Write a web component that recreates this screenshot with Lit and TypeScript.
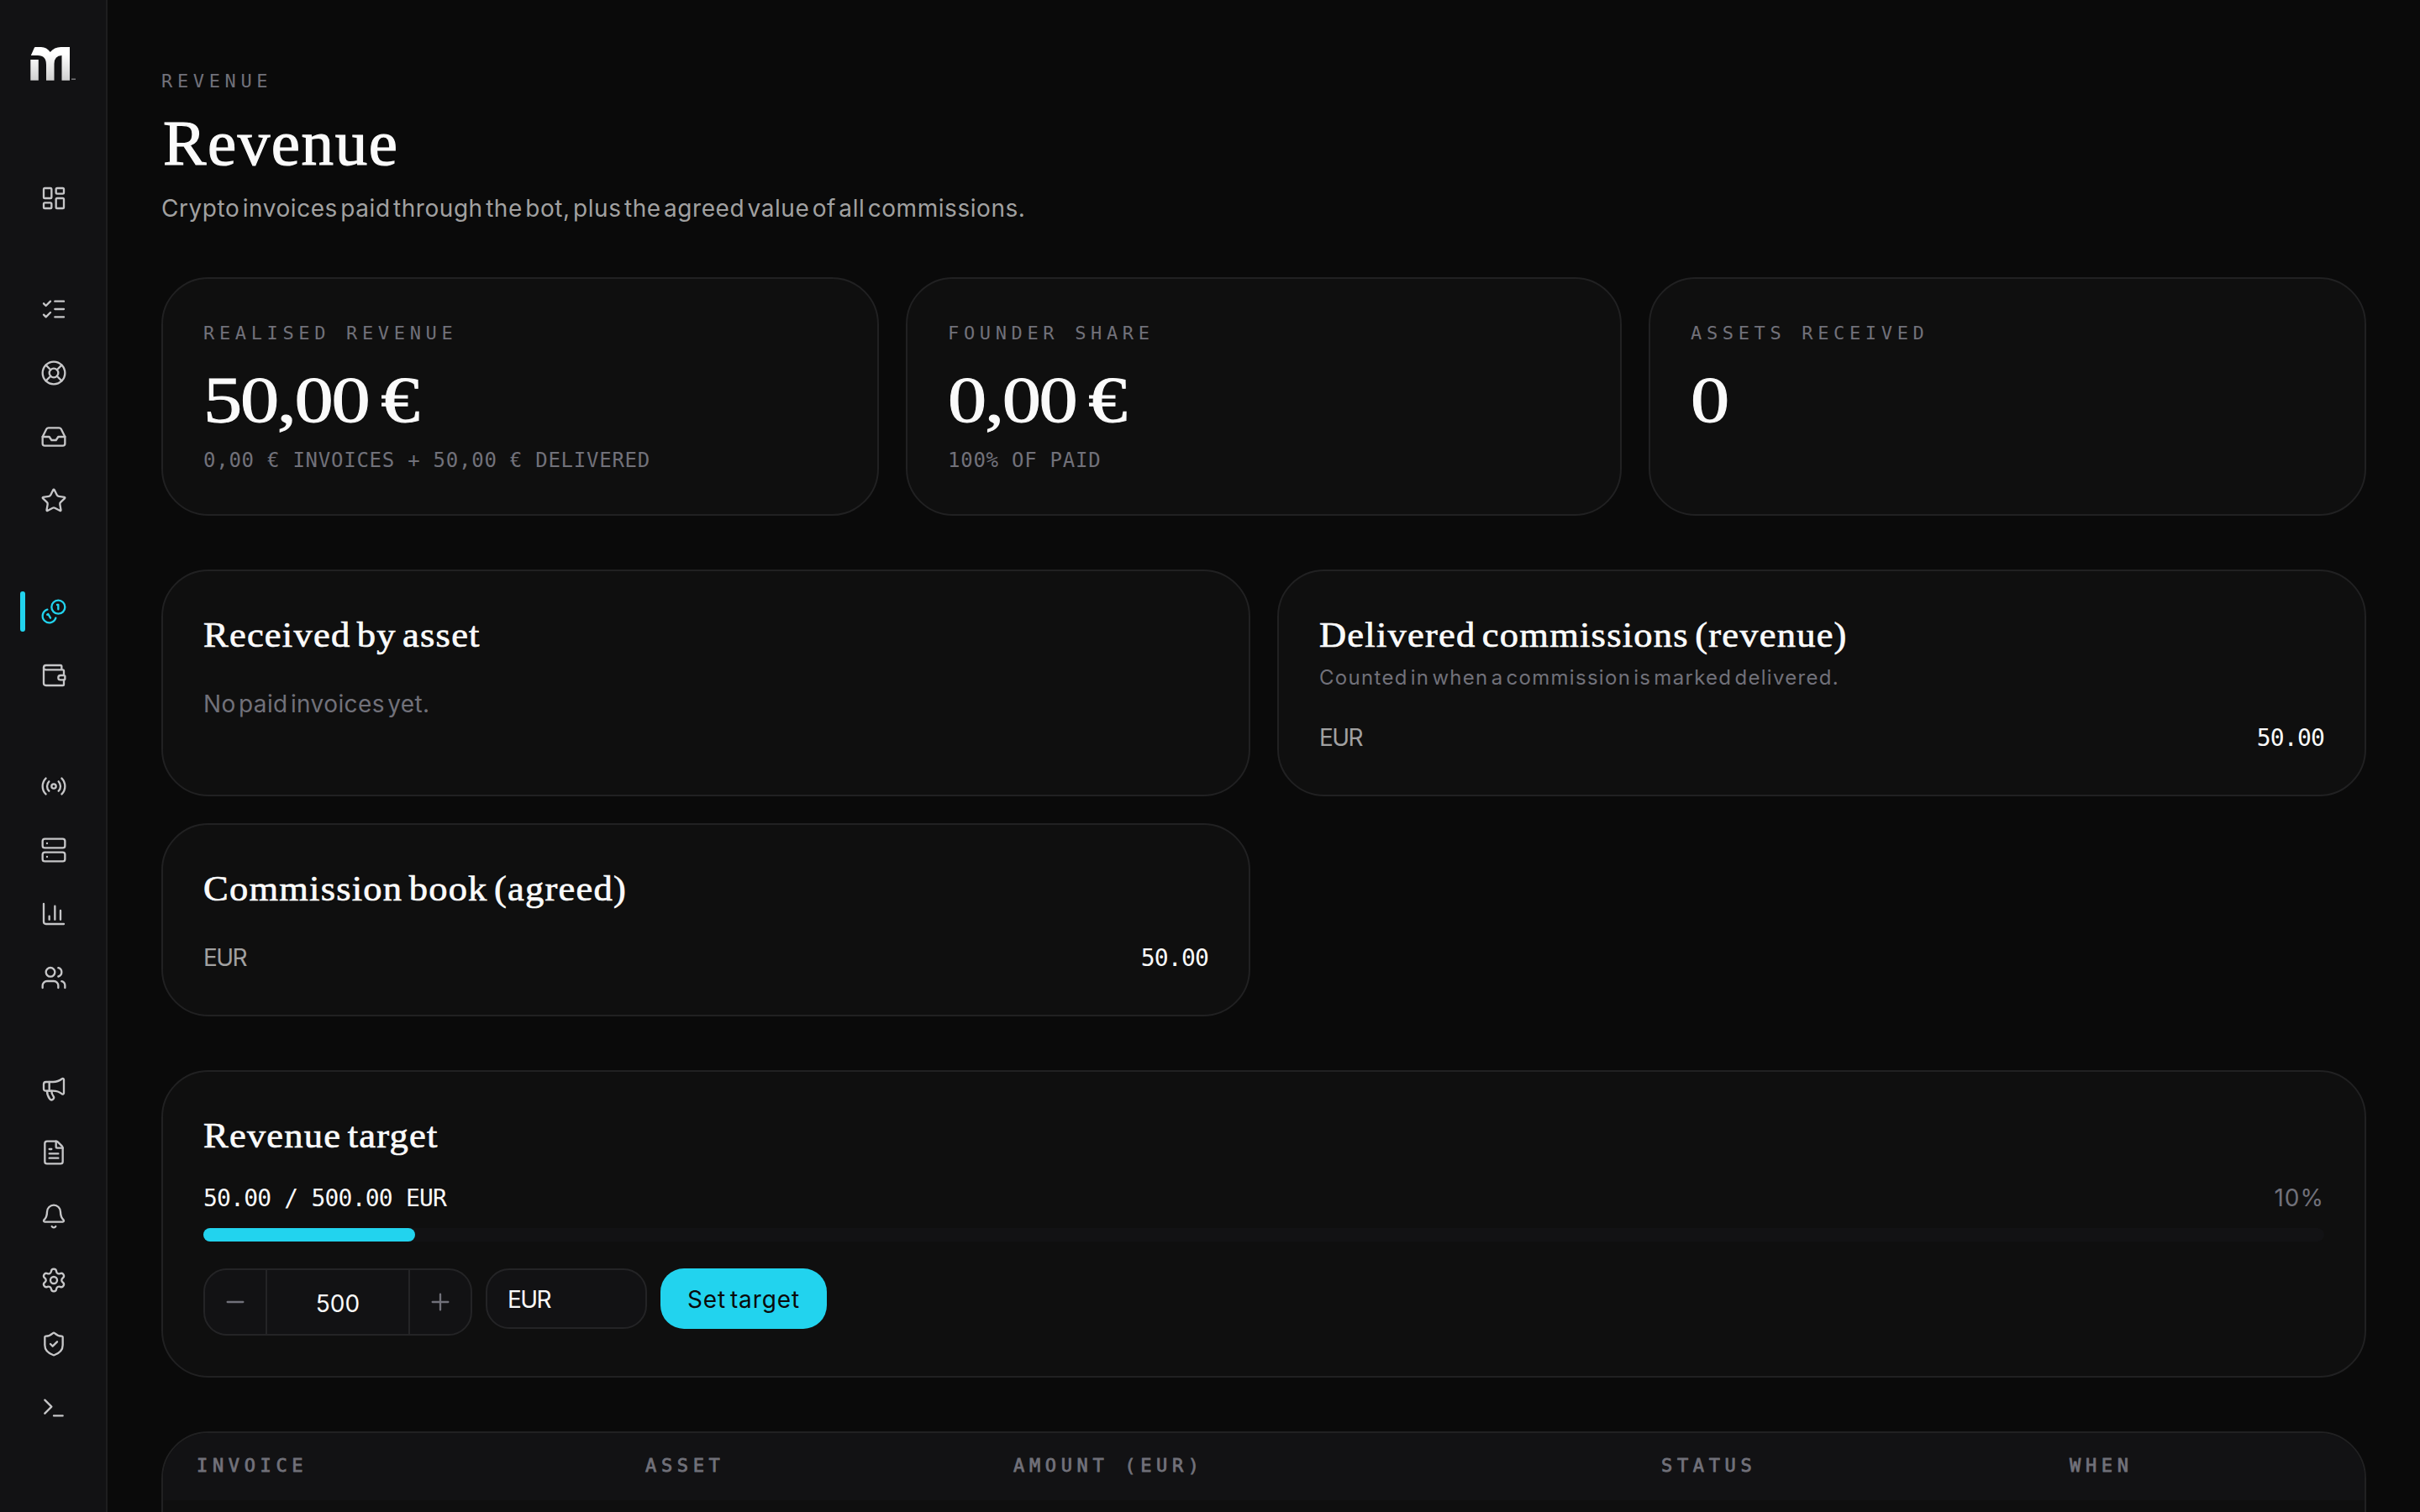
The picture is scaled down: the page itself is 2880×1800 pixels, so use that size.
import { LitElement, html, css, svg } from 'lit';
import { customElement, property } from 'lit/decorators.js';
import { classMap } from 'lit/directives/class-map.js';

// all icons live on a 24x24 grid and are stroked with currentColor
const icons: Record<string, any> = {
  dashboard: svg`<rect x="3" y="3" width="7" height="9" rx="1"/><rect x="14" y="3" width="7" height="5" rx="1"/><rect x="14" y="12" width="7" height="9" rx="1"/><rect x="3" y="16" width="7" height="5" rx="1"/>`,
  tasks: svg`<path d="M13 5h8M13 12h8M13 19h8M3 17l2 2 4-4M3 7l2 2 4-4"/>`,
  support: svg`<circle cx="12" cy="12" r="10"/><path d="m4.93 4.93 4.24 4.24M14.83 9.17l4.24-4.24M14.83 14.83l4.24 4.24M9.17 14.83l-4.24 4.24"/><circle cx="12" cy="12" r="4"/>`,
  inbox: svg`<path d="M22 12h-6l-2 3h-4l-2-3H2"/><path d="M5.45 5.11 2 12v6a2 2 0 0 0 2 2h16a2 2 0 0 0 2-2v-6l-3.45-6.89A2 2 0 0 0 16.76 4H7.24a2 2 0 0 0-1.79 1.11z"/>`,
  star: svg`<path d="M11.525 2.295a.53.53 0 0 1 .95 0l2.31 4.679a2.123 2.123 0 0 0 1.595 1.16l5.166.756a.53.53 0 0 1 .294.904l-3.736 3.638a2.123 2.123 0 0 0-.611 1.878l.882 5.14a.53.53 0 0 1-.771.56l-4.618-2.428a2.122 2.122 0 0 0-1.973 0L6.396 21.01a.53.53 0 0 1-.77-.56l.881-5.139a2.122 2.122 0 0 0-.611-1.879L2.16 9.795a.53.53 0 0 1 .294-.906l5.165-.755a2.122 2.122 0 0 0 1.597-1.16z"/>`,
  coins: svg`<path d="M13.744 17.736a6 6 0 1 1-7.48-7.48M15 6h1v4M6.134 14.768l.866-.5 2 3.464"/><circle cx="16" cy="8" r="6"/>`,
  wallet: svg`<path d="M19 7V4a1 1 0 0 0-1-1H5a2 2 0 0 0 0 4h15a1 1 0 0 1 1 1v4h-3a2 2 0 0 0 0 4h3a1 1 0 0 0 1-1v-2a1 1 0 0 0-1-1"/><path d="M3 5v14a2 2 0 0 0 2 2h15a1 1 0 0 0 1-1v-4"/>`,
  radio: svg`<path d="M16.247 7.761a6 6 0 0 1 0 8.478M19.075 4.933a10 10 0 0 1 0 14.134M4.925 19.067a10 10 0 0 1 0-14.134M7.753 16.239a6 6 0 0 1 0-8.478"/><circle cx="12" cy="12" r="2"/>`,
  server: svg`<rect x="2" y="2" width="20" height="8" rx="2"/><rect x="2" y="14" width="20" height="8" rx="2"/><path d="M6 6h.01M6 18h.01"/>`,
  chart: svg`<path d="M3 3v16a2 2 0 0 0 2 2h16M18 17V9M13 17V5M8 17v-3"/>`,
  users: svg`<path d="M16 21v-2a4 4 0 0 0-4-4H6a4 4 0 0 0-4 4v2M16 3.128a4 4 0 0 1 0 7.744M22 21v-2a4 4 0 0 0-3-3.87"/><circle cx="9" cy="7" r="4"/>`,
  megaphone: svg`<path d="M11 6a13 13 0 0 0 8.4-2.8A1 1 0 0 1 21 4v12a1 1 0 0 1-1.6.8A13 13 0 0 0 11 14H5a2 2 0 0 1-2-2V8a2 2 0 0 1 2-2z"/><path d="M6 14a12 12 0 0 0 2.4 7.2 2 2 0 0 0 3.2-2.4A8 8 0 0 1 10 14M8 6v8"/>`,
  file: svg`<path d="M6 22a2 2 0 0 1-2-2V4a2 2 0 0 1 2-2h8a2.4 2.4 0 0 1 1.704.706l3.588 3.588A2.4 2.4 0 0 1 20 8v12a2 2 0 0 1-2 2z"/><path d="M14 2v5a1 1 0 0 0 1 1h5M10 9H8M16 13H8M16 17H8"/>`,
  bell: svg`<path d="M10.268 21a2 2 0 0 0 3.464 0M3.262 15.326A1 1 0 0 0 4 17h16a1 1 0 0 0 .74-1.673C19.41 13.956 18 12.499 18 8A6 6 0 0 0 6 8c0 4.499-1.411 5.956-2.738 7.326"/>`,
  settings: svg`<path d="M9.671 4.136a2.34 2.34 0 0 1 4.659 0 2.34 2.34 0 0 0 3.319 1.915 2.34 2.34 0 0 1 2.33 4.033 2.34 2.34 0 0 0 0 3.831 2.34 2.34 0 0 1-2.33 4.033 2.34 2.34 0 0 0-3.319 1.915 2.34 2.34 0 0 1-4.659 0 2.34 2.34 0 0 0-3.32-1.915 2.34 2.34 0 0 1-2.33-4.033 2.34 2.34 0 0 0 0-3.831A2.34 2.34 0 0 1 6.35 6.051a2.34 2.34 0 0 0 3.319-1.915"/><circle cx="12" cy="12" r="3"/>`,
  shield: svg`<path d="M20 13c0 5-3.5 7.5-7.66 8.95a1 1 0 0 1-.67-.01C7.5 20.5 4 18 4 13V6a1 1 0 0 1 1-1c2 0 4.5-1.2 6.24-2.72a1.17 1.17 0 0 1 1.52 0C14.51 3.81 17 5 19 5a1 1 0 0 1 1 1z"/><path d="m9 12 2 2 4-4"/>`,
  terminal: svg`<path d="M12 19h8M4 17l6-6-6-6"/>`,
  minus: svg`<path d="M5 12h14"/>`,
  plus: svg`<path d="M5 12h14M12 5v14"/>`,
};

@customElement('rv-icon')
export class RvIcon extends LitElement {
  @property() name = '';

  static styles = css`
    :host {
      display: block;
      width: 32px;
      height: 32px;
    }
    .icon {
      display: block;
      width: 100%;
      height: 100%;
      fill: none;
      stroke: currentColor;
      stroke-width: 1.75;
      stroke-linecap: round;
      stroke-linejoin: round;
    }
  `;

  render() {
    return html`<svg class="icon" viewBox="0 0 24 24">${icons[this.name]}</svg>`;
  }
}

@customElement('rv-sidebar')
export class RvSidebar extends LitElement {
  @property() active = 'coins';

  groups = [
    ['dashboard'],
    ['tasks', 'support', 'inbox', 'star'],
    ['coins', 'wallet'],
    ['radio', 'server', 'chart', 'users'],
    ['megaphone', 'file', 'bell', 'settings', 'shield', 'terminal'],
  ];

  static styles = css`
    :host {
      display: flex;
      flex-direction: column;
      box-sizing: border-box;
      width: 128px;
      height: 100%;
      padding-top: 56px;
      background: #121214;
      border-right: 2px solid #1e1e1f;
    }
    .logo {
      display: block;
      width: 56px;
      height: 40px;
      margin: 0 0 104px 36px;
    }
    .nav {
      display: flex;
      flex-direction: column;
      gap: 60px;
    }
    .group {
      display: flex;
      flex-direction: column;
      gap: 4px;
    }
    .item {
      position: relative;
      display: flex;
      align-items: center;
      justify-content: center;
      height: 72px;
      padding-left: 2px;
      color: #c6c6c8;
    }
    .item.active {
      color: #22d3ee;
    }
    .item.active::before {
      content: '';
      position: absolute;
      left: 24px;
      top: 12px;
      width: 6px;
      height: 48px;
      border-radius: 3px;
      background: #22d3ee;
    }
  `;

  render() {
    return html`
      <svg class="logo" viewBox="0 0 56 40">
        <defs>
          <linearGradient id="shade" gradientUnits="userSpaceOnUse" x1="0" y1="0" x2="0" y2="40">
            <stop offset="0.2" stop-color="#fff" />
            <stop offset="1" stop-color="#cfcfcf" />
          </linearGradient>
        </defs>
        <path
          fill="url(#shade)"
          d="M5 0.500Q5.300 0 6 0H13Q19.500 0 23.800 6Q28.500 0 36.500 0H47V39.700H37.500V10Q28.500 10.500 28.500 20V39.700H19V21Q19 10 9 10H0.800Z"
        />
        <path fill="url(#shade)" d="M0.300 15H9.800V39.700H0.300Z" />
        <path fill="#77777a" d="M49 37.500h5v1.500h-5z" />
      </svg>
      <nav class="nav">
        ${this.groups.map(group => html`
          <div class="group">
            ${group.map(name => html`
              <div class=${classMap({ item: true, active: name === this.active })}>
                <rv-icon .name=${name}></rv-icon>
              </div>
            `)}
          </div>
        `)}
      </nav>
    `;
  }
}

@customElement('app-root')
export class AppRoot extends LitElement {
  stats = [
    { label: 'Realised revenue', value: '50,00 €', hint: '0,00 € invoices + 50,00 € delivered' },
    { label: 'Founder share', value: '0,00 €', hint: '100% of paid' },
    { label: 'Assets received', value: '0', hint: '' },
  ];

  panels = [
    { title: 'Received by asset', note: '', empty: 'No paid invoices yet.', rows: [] },
    {
      title: 'Delivered commissions (revenue)',
      note: 'Counted in when a commission is marked delivered.',
      empty: '',
      rows: [{ currency: 'EUR', amount: '50.00' }],
    },
    { title: 'Commission book (agreed)', note: '', empty: '', rows: [{ currency: 'EUR', amount: '50.00' }] },
  ];

  target = { current: 50, goal: 500, currency: 'EUR' };

  columns = ['Invoice', 'Asset', 'Amount (EUR)', 'Status', 'When'];

  static styles = css`
    :host {
      --bg: #0a0a0a;
      --card: #0f0f0f;
      --raised: #121214;
      --line: #212122;
      --text: #fafafa;
      --soft: #a1a1a1;
      --muted: #71717a;
      --accent: #22d3ee;
      --serif: 'Liberation Serif', serif;
      --sans: Inter, sans-serif;
      --mono: 'DejaVu Sans Mono', monospace;
      display: flex;
      width: 100%;
      height: 1800px;
      overflow: hidden;
      background: var(--bg);
      color: var(--text);
      font-family: var(--sans);
      font-size: 28px;
      line-height: 40px;
    }
    rv-sidebar {
      flex: none;
    }
    .main {
      flex: 1;
      display: flex;
      flex-direction: column;
      padding: 80px 64px 0;
    }
    .label {
      font-family: var(--mono);
      font-size: 22px;
      letter-spacing: 5.65px;
      line-height: 30px;
      text-transform: uppercase;
      color: var(--muted);
    }
    .label.eyebrow {
      line-height: 34px;
    }
    .page-title {
      margin: 16px 0 0 2px;
      font: 400 77px/80px var(--serif);
      letter-spacing: 1.6px;
      -webkit-text-stroke: 1.2px currentColor;
    }
    .page-sub {
      margin: 16px 0 0;
      line-height: 44px;
      letter-spacing: 0.55px;
      word-spacing: -5px;
      color: var(--soft);
    }
    .stats {
      display: grid;
      grid-template-columns: 427fr 426fr 427fr;
      gap: 32px;
      margin-top: 60px;
    }
    .card {
      box-sizing: border-box;
      padding: 48px;
      background: var(--card);
      border: 2px solid var(--line);
      border-radius: 56px;
    }
    .card.stat {
      padding-top: 50px;
    }
    .stat-value {
      margin-top: 24px;
      font: 400 79px/80px var(--serif);
      letter-spacing: -2px;
      word-spacing: -5px;
      transform: scaleX(1.17);
      transform-origin: left;
      -webkit-text-stroke: 1px currentColor;
    }
    .stat-hint {
      height: 32px;
      margin-top: 16px;
      font: 24px/32px var(--mono);
      letter-spacing: 0.75px;
      text-transform: uppercase;
      color: var(--muted);
    }
    .panels {
      display: grid;
      grid-template-columns: repeat(2, 1fr);
      gap: 32px;
      margin-top: 64px;
    }
    .heading {
      margin: 0;
      font: 400 42px/56px var(--serif);
      letter-spacing: 1.15px;
      word-spacing: -4.7px;
      transform: scaleX(1.06);
      transform-origin: left;
      -webkit-text-stroke: 0.7px currentColor;
    }
    .note {
      margin-top: 5px;
      font-size: 24px;
      line-height: 35px;
      letter-spacing: 1.3px;
      word-spacing: -5px;
      color: var(--muted);
    }
    .empty {
      margin-top: 34px;
      letter-spacing: 0.4px;
      word-spacing: -5px;
      color: var(--muted);
    }
    .row {
      display: flex;
      justify-content: space-between;
      height: 40px;
      margin-top: 34px;
    }
    .currency {
      color: var(--soft);
      letter-spacing: -1.6px;
    }
    .amount {
      font-family: var(--mono);
      line-height: 42px;
      letter-spacing: -0.8px;
    }
    .target {
      margin-top: 64px;
    }
    .target .row {
      margin-top: 26px;
    }
    .percent {
      letter-spacing: 1px;
      color: var(--muted);
    }
    .track {
      height: 16px;
      margin-top: 16px;
      border-radius: 8px;
      background: var(--raised);
    }
    .fill {
      height: 100%;
      border-radius: 8px;
      background: var(--accent);
    }
    .controls {
      display: flex;
      align-items: flex-start;
      gap: 16px;
      margin-top: 32px;
    }
    .stepper,
    .field {
      display: flex;
      box-sizing: border-box;
      background: var(--raised);
      border: 2px solid #242426;
      border-radius: 28px;
    }
    .stepper {
      width: 320px;
      height: 80px;
    }
    .step {
      display: flex;
      align-items: center;
      justify-content: center;
      width: 72px;
      color: var(--muted);
    }
    .count {
      flex: 1;
      border: solid #242426;
      border-width: 0 2px;
      line-height: 80px;
      text-align: center;
    }
    .field {
      align-items: center;
      width: 192px;
      height: 72px;
      padding: 2px 0 0 24px;
      letter-spacing: -1.6px;
    }
    .submit {
      width: 198px;
      height: 72px;
      padding: 0;
      border: 0;
      border-radius: 28px;
      background: var(--accent);
      color: #0a0a0a;
      font: 400 28px/74px var(--sans);
      letter-spacing: 0.9px;
      word-spacing: -4px;
    }
    .table {
      flex: none;
      height: 240px;
      margin-top: 64px;
      padding: 0;
      overflow: hidden;
    }
    .thead {
      display: grid;
      grid-template-columns: 534fr 438fr 771fr 486fr 391fr;
      height: 80px;
      background: var(--raised);
    }
    .th {
      padding-left: 40px;
      line-height: 77px;
      -webkit-text-stroke: 0.8px currentColor;
    }
  `;

  renderPanel(panel: any) {
    return html`
      <section class="card">
        <h2 class="heading">${panel.title}</h2>
        ${panel.note ? html`<div class="note">${panel.note}</div>` : ''}
        ${panel.empty ? html`<div class="empty">${panel.empty}</div>` : ''}
        ${panel.rows.map((row: any) => html`
          <div class="row">
            <span class="currency">${row.currency}</span>
            <span class="amount">${row.amount}</span>
          </div>
        `)}
      </section>
    `;
  }

  renderTarget() {
    const { current, goal, currency } = this.target;
    const percent = Math.round((current / goal) * 100);
    return html`
      <section class="card target">
        <h2 class="heading">Revenue target</h2>
        <div class="row">
          <span class="amount">${current.toFixed(2)} / ${goal.toFixed(2)} ${currency}</span>
          <span class="percent">${percent}%</span>
        </div>
        <div class="track"><div class="fill" style="width: ${percent}%"></div></div>
        <div class="controls">
          <div class="stepper">
            <div class="step"><rv-icon name="minus"></rv-icon></div>
            <div class="count">${goal}</div>
            <div class="step"><rv-icon name="plus"></rv-icon></div>
          </div>
          <div class="field">${currency}</div>
          <button class="submit">Set target</button>
        </div>
      </section>
    `;
  }

  render() {
    return html`
      <rv-sidebar></rv-sidebar>
      <main class="main">
        <div class="label eyebrow">Revenue</div>
        <h1 class="page-title">Revenue</h1>
        <p class="page-sub">Crypto invoices paid through the bot, plus the agreed value of all commissions.</p>
        <div class="stats">
          ${this.stats.map(stat => html`
            <div class="card stat">
              <div class="label">${stat.label}</div>
              <div class="stat-value">${stat.value}</div>
              <div class="stat-hint">${stat.hint}</div>
            </div>
          `)}
        </div>
        <div class="panels">${this.panels.map(panel => this.renderPanel(panel))}</div>
        ${this.renderTarget()}
        <div class="card table">
          <div class="thead">
            ${this.columns.map(name => html`<div class="label th">${name}</div>`)}
          </div>
        </div>
      </main>
    `;
  }
}
